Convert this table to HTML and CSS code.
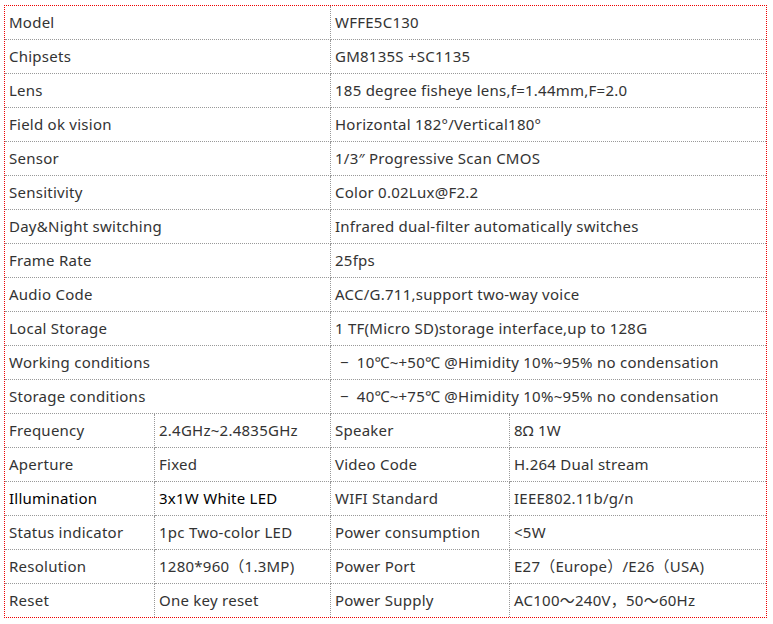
FILE: index.html
```html
<!DOCTYPE html>
<html>
<head>
<meta charset="utf-8">
<link rel="stylesheet" href="styles.css">
</head>
<body>
<div class="spec">
  <div class="c label span">Model</div><div class="c val span last">WFFE5C130</div>
  <div class="c label span">Chipsets</div><div class="c val span last">GM8135S +SC1135</div>
  <div class="c label span">Lens</div><div class="c val span last">185 degree fisheye lens,f=1.44mm,F=2.0</div>
  <div class="c label span">Field ok vision</div><div class="c val span last">Horizontal 182°/Vertical180°</div>
  <div class="c label span">Sensor</div><div class="c val span last">1/3″ Progressive Scan CMOS</div>
  <div class="c label span">Sensitivity</div><div class="c val span last">Color 0.02Lux@F2.2</div>
  <div class="c label span">Day&amp;Night switching</div><div class="c val span last">Infrared dual-filter automatically switches</div>
  <div class="c label span">Frame Rate</div><div class="c val span last">25fps</div>
  <div class="c label span">Audio Code</div><div class="c val span last">ACC/G.711,support two-way voice</div>
  <div class="c label span">Local Storage</div><div class="c val span last">1 TF(Micro SD)storage interface,up to 128G</div>
  <div class="c label span">Working conditions</div><div class="c val span last"><span class="minus">−</span>10℃~+50℃ @Himidity 10%~95% no condensation</div>
  <div class="c label span">Storage conditions</div><div class="c val span last"><span class="minus">−</span>40℃~+75℃ @Himidity 10%~95% no condensation</div>

  <div class="c">Frequency</div><div class="c">2.4GHz~2.4835GHz</div><div class="c">Speaker</div><div class="c last">8Ω 1W</div>
  <div class="c">Aperture</div><div class="c">Fixed</div><div class="c">Video Code</div><div class="c last">H.264 Dual stream</div>
  <div class="c dark">Illumination</div><div class="c dark">3x1W White LED</div><div class="c">WIFI Standard</div><div class="c last">IEEE802.11b/g/n</div>
  <div class="c">Status indicator</div><div class="c">1pc Two-color LED</div><div class="c">Power consumption</div><div class="c last">&lt;5W</div>
  <div class="c">Resolution</div><div class="c">1280*960（1.3MP)</div><div class="c">Power Port</div><div class="c last">E27（Europe）/E26（USA)</div>
  <div class="c bottom">Reset</div><div class="c bottom">One key reset</div><div class="c bottom">Power Supply</div><div class="c bottom last">AC100～240V，50～60Hz</div>
</div>
</body>
</html>
```
FILE: styles.css
```css
html, body {
  margin: 0;
  padding: 0;
  background: #fff;
}
body {
  padding: 5px 0 0 4px;
  font-family: "Noto Sans", "Noto Sans CJK SC", sans-serif;
  font-size: 15px;
  letter-spacing: 0.25px;
  color: #333;
}
.spec {
  width: 761px;
  border: 1px dotted #e00;
  display: grid;
  grid-template-columns: 150px 176px 179px 256px;
  grid-template-rows: repeat(17, 34px) 33px;
}
.c {
  box-sizing: border-box;
  border-right: 1px dotted #999;
  border-bottom: 1px dotted #999;
  padding: 0 0 2px 4px;
  display: flex;
  align-items: center;
  white-space: nowrap;
  overflow: hidden;
}
.span {
  grid-column: span 2;
}
.last {
  border-right: none;
}
.bottom {
  border-bottom: none;
}
.dark {
  color: #000;
}
.minus {
  margin: 0 8px 0 5px;
}
```
